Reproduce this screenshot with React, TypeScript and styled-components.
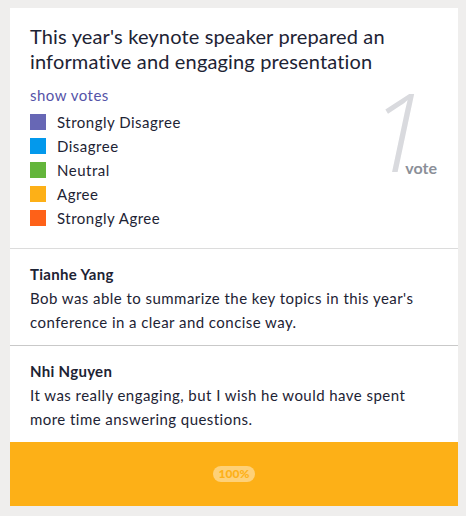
import React from 'react';
import styled, { createGlobalStyle } from 'styled-components';

const GlobalStyle = createGlobalStyle`
  html, body {
    margin: 0;
    padding: 0;
    background: #efeeed;
  }
  body {
    font-family: Lato, "Noto Sans", sans-serif;
    color: #1d2334;
  }
`;

const Page = styled.div`
  padding: 8px 8px 10px 10px;
`;

const Card = styled.div`
  background: #fff;
  display: flex;
  flex-direction: column;
`;

const Header = styled.div`
  padding: 16px 20px 18px 20px;
  border-bottom: 1px solid #dcdcdc;
`;

const Title = styled.h1`
  margin: 0;
  font-size: 20px;
  line-height: 25px;
  font-weight: 400;
  letter-spacing: 0.15px;
  color: #1d2334;
`;

const ShowVotes = styled.a`
  display: block;
  margin-top: 11px;
  font-size: 15px;
  line-height: 20px;
  letter-spacing: 0.5px;
  color: #5553a8;
  cursor: pointer;
`;

const Body = styled.div`
  display: flex;
  align-items: flex-start;
  justify-content: space-between;
  margin-top: 5px;
`;

const Legend = styled.ul`
  list-style: none;
  margin: 0;
  padding: 0;
`;

const LegendRow = styled.li`
  display: flex;
  align-items: center;
  gap: 11px;
  height: 24px;
  font-size: 15px;
  line-height: 24px;
  letter-spacing: 0.5px;
`;

const Swatch = styled.span<{ $color: string }>`
  width: 16px;
  height: 16px;
  background: ${p => p.$color};
`;

const Count = styled.div`
  display: flex;
  align-items: baseline;
  margin-top: -19px;
  margin-right: 1px;
`;

const CountNumber = styled.span`
  font-family: "Open Sans", sans-serif;
  font-size: 109px;
  line-height: 78px;
  font-weight: 300;
  font-style: italic;
  color: #d9dade;
`;

const CountLabel = styled.span`
  font-size: 16px;
  font-weight: 700;
  color: #8b8f98;
  margin-left: -23px;
  position: relative;
  top: 2px;
`;

const Comment = styled.div<{ $last?: boolean }>`
  padding: 13px 20px 11px 20px;
  border-bottom: ${p => (p.$last ? 'none' : '1px solid #c9c9c9')};
`;

const Author = styled.div`
  font-size: 15px;
  font-weight: 700;
  line-height: 24px;
  letter-spacing: 0.3px;
`;

const CommentText = styled.p`
  margin: 0;
  font-size: 15px;
  line-height: 24px;
  letter-spacing: 0.45px;
`;

const ResultBar = styled.div`
  height: 64px;
  background: #fdb017;
  display: flex;
  align-items: center;
  justify-content: center;
`;

const Percent = styled.span`
  display: inline-block;
  padding: 0 6px;
  height: 16px;
  line-height: 16px;
  border-radius: 8px;
  background: rgba(255, 255, 255, 0.42);
  color: #fdb017;
  font-size: 12px;
  font-weight: 900;
`;

const options = [
  { label: 'Strongly Disagree', color: '#6767b5' },
  { label: 'Disagree', color: '#0399ec' },
  { label: 'Neutral', color: '#63b53b' },
  { label: 'Agree', color: '#fdb017' },
  { label: 'Strongly Agree', color: '#fe6118' },
];

const comments = [
  {
    author: 'Tianhe Yang',
    text: "Bob was able to summarize the key topics in this year's conference in a clear and concise way.",
  },
  {
    author: 'Nhi Nguyen',
    text: 'It was really engaging, but I wish he would have spent more time answering questions.',
  },
];

export default function App() {
  return (
    <Page>
      <GlobalStyle />
      <Card>
        <Header>
          <Title>This year's keynote speaker prepared an informative and engaging presentation</Title>
          <ShowVotes>show votes</ShowVotes>
          <Body>
            <Legend>
              {options.map(o => (
                <LegendRow key={o.label}>
                  <Swatch $color={o.color} />
                  {o.label}
                </LegendRow>
              ))}
            </Legend>
            <Count>
              <CountNumber>1</CountNumber>
              <CountLabel>vote</CountLabel>
            </Count>
          </Body>
        </Header>
        {comments.map((c, i) => (
          <Comment key={c.author} $last={i === comments.length - 1}>
            <Author>{c.author}</Author>
            <CommentText>{c.text}</CommentText>
          </Comment>
        ))}
        <ResultBar>
          <Percent>100%</Percent>
        </ResultBar>
      </Card>
    </Page>
  );
}
